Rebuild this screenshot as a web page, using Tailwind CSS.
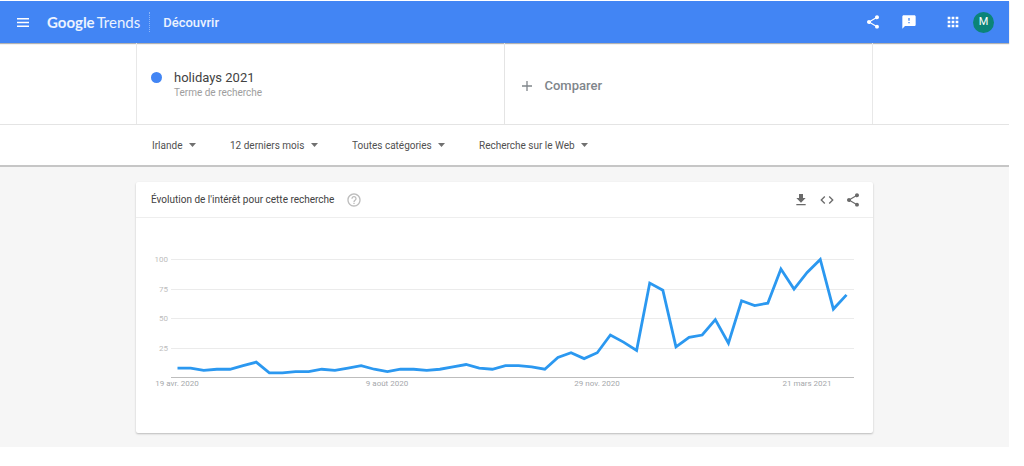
<!DOCTYPE html>
<html lang="fr">
<head>
  <meta charset="UTF-8" />
  <meta name="viewport" content="width=device-width, initial-scale=1.0"/>
  <title>holidays 2021 - Découvrir - Google Trends</title>
  <script src="https://cdn.jsdelivr.net/npm/@tailwindcss/browser@4"></script>
</head>
<body class="bg-white pt-px pr-[15px] font-['Roboto','Liberation_Sans',sans-serif] text-[#424242]">

  <!-- Top bar -->
  <header class="flex h-[42px] items-center bg-[#4285f4] pr-[15px] pl-4 text-white shadow-[0_1px_1px_rgba(0,0,0,0.3)]">
    <button type="button" aria-label="Menu" class="flex size-[14px] items-center justify-center">
      <svg class="h-[9px] w-3" viewBox="0 0 12 9" fill="currentColor"><path d="M0 0h12v1.4H0zM0 3.8h12v1.4H0zM0 7.6h12V9H0z"/></svg>
    </button>
    <a href="#" class="ml-[17px] flex gap-[2px] font-['Lato',sans-serif] text-[15px] text-white/90"><span class="font-bold">Google</span><span>Trends</span></a>
    <span class="ml-[9px] h-5 border-l border-dotted border-white/40"></span>
    <nav class="ml-[13px] pb-px"><a href="#" class="text-[13px] font-medium text-white/90">Découvrir</a></nav>

    <div class="ml-auto flex items-center">
      <button type="button" aria-label="Partager">
        <svg class="size-4" viewBox="0 0 24 24" fill="currentColor"><path d="M18 16.08c-.76 0-1.44.3-1.96.77L8.91 12.7c.05-.23.09-.46.09-.7s-.04-.47-.09-.7l7.05-4.11c.54.5 1.25.81 2.04.81 1.66 0 3-1.34 3-3s-1.34-3-3-3-3 1.34-3 3c0 .24.04.47.09.7L8.04 9.81C7.5 9.31 6.79 9 6 9c-1.66 0-3 1.34-3 3s1.34 3 3 3c.79 0 1.5-.31 2.04-.81l7.12 4.16c-.05.21-.08.43-.08.65 0 1.61 1.31 2.92 2.92 2.92s2.92-1.31 2.92-2.92-1.31-2.92-2.92-2.92z"/></svg>
      </button>
      <button type="button" aria-label="Commentaires" class="ml-5">
        <svg class="size-4" viewBox="0 0 24 24" fill="currentColor"><path d="M20 2H4c-1.1 0-1.99.9-1.99 2L2 22l4-4h14c1.1 0 2-.9 2-2V4c0-1.1-.9-2-2-2zm-7 12h-2v-2h2v2zm0-4h-2V6h2v4z"/></svg>
      </button>
      <button type="button" aria-label="Applications Google" class="ml-7">
        <svg class="size-4" viewBox="0 0 24 24" fill="currentColor"><path d="M4 8h4V4H4v4zm6 12h4v-4h-4v4zm-6 0h4v-4H4v4zm0-6h4v-4H4v4zm6 0h4v-4h-4v4zm6-10v4h4V4h-4zm-6 4h4V4h-4v4zm6 6h4v-4h-4v4zm0 6h4v-4h-4v4z"/></svg>
      </button>
      <button type="button" aria-label="Compte" class="ml-3 size-[21px] rounded-full bg-[#0b8478] text-[11px]">M</button>
    </div>
  </header>

  <!-- Search terms -->
  <section class="border-b border-[#e4e4e4]">
    <div class="mx-auto grid h-[81px] max-w-[737px] grid-cols-2 border-x border-[#e8e8e8]">
      <div class="flex items-center gap-3 border-r border-[#e4e4e4] pt-[2px] pl-[14px]">
        <span class="mb-[14px] size-[11px] rounded-full bg-[#4285f4]"></span>
        <div>
          <h1 class="text-[13px] leading-4">holidays 2021</h1>
          <p class="text-[10px] leading-[14px] text-[#9e9e9e]">Terme de recherche</p>
        </div>
      </div>
      <button type="button" class="flex items-center gap-[13px] pt-1 pl-[17px] text-[13px] font-medium text-[#80868b]">
        <svg class="size-[10px]" viewBox="0 0 10 10" stroke="currentColor" stroke-width="1.3"><path d="M5 0v10M0 5h10"/></svg>
        Comparer
      </button>
    </div>
  </section>

  <!-- Filters -->
  <section class="border-b-2 border-[#c6c6c6]">
    <form class="mx-auto flex h-10 max-w-[737px] items-center gap-[34px] pl-4 text-[10px] text-[#505050]">
      <label class="flex items-center gap-[6px]">
        <select aria-label="Zone géographique" class="appearance-none"><option>Irlande</option></select>
        <svg class="h-1 w-[7px] text-[#707070]" viewBox="0 0 7 4" fill="currentColor"><path d="M0 0h7L3.5 4z"/></svg>
      </label>
      <label class="flex items-center gap-[6px]">
        <select aria-label="Période" class="appearance-none"><option>12 derniers mois</option></select>
        <svg class="h-1 w-[7px] text-[#707070]" viewBox="0 0 7 4" fill="currentColor"><path d="M0 0h7L3.5 4z"/></svg>
      </label>
      <label class="flex items-center gap-[6px]">
        <select aria-label="Catégorie" class="appearance-none"><option>Toutes catégories</option></select>
        <svg class="h-1 w-[7px] text-[#707070]" viewBox="0 0 7 4" fill="currentColor"><path d="M0 0h7L3.5 4z"/></svg>
      </label>
      <label class="flex items-center gap-[6px]">
        <select aria-label="Type de recherche" class="appearance-none"><option>Recherche sur le Web</option></select>
        <svg class="h-1 w-[7px] text-[#707070]" viewBox="0 0 7 4" fill="currentColor"><path d="M0 0h7L3.5 4z"/></svg>
      </label>
    </form>
  </section>

  <!-- Interest over time -->
  <main class="bg-[#f6f6f6] pt-[15px] pb-[14px]">
    <div class="mx-auto max-w-[737px] rounded-xs bg-white shadow-[0_1px_2px_rgba(0,0,0,0.24)]">
      <div class="flex h-9 items-center border-b border-[#eeeeee] pr-3 pl-[15px]">
        <h2 class="text-[10px]">Évolution de l'intérêt pour cette recherche</h2>
        <button type="button" aria-label="Aide" class="ml-3 text-[#bdbdbd]">
          <svg class="size-4" viewBox="0 0 24 24" fill="currentColor"><path d="M11 18h2v-2h-2v2zm1-16C6.48 2 2 6.48 2 12s4.48 10 10 10 10-4.48 10-10S17.52 2 12 2zm0 18c-4.41 0-8-3.59-8-8s3.59-8 8-8 8 3.59 8 8-3.59 8-8 8zm0-14c-2.21 0-4 1.79-4 4h2c0-1.1.9-2 2-2s2 .9 2 2c0 2-3 1.75-3 5h2c0-2.25 3-2.5 3-5 0-2.21-1.79-4-4-4z"/></svg>
        </button>
        <div class="ml-auto flex items-center gap-[10px] text-[#6a6a6a]">
          <button type="button" aria-label="Télécharger">
            <svg class="size-4" viewBox="0 0 24 24" fill="currentColor"><path d="M19 9h-4V3H9v6H5l7 7 7-7zM5 18v2h14v-2H5z"/></svg>
          </button>
          <button type="button" aria-label="Intégrer">
            <svg class="size-4" viewBox="0 0 24 24" fill="currentColor"><path d="M9.4 16.6L4.8 12l4.6-4.6L8 6l-6 6 6 6 1.4-1.4zm5.2 0l4.6-4.6-4.6-4.6L16 6l6 6-6 6-1.4-1.4z"/></svg>
          </button>
          <button type="button" aria-label="Partager le graphique">
            <svg class="size-4" viewBox="0 0 24 24" fill="currentColor"><path d="M18 16.08c-.76 0-1.44.3-1.96.77L8.91 12.7c.05-.23.09-.46.09-.7s-.04-.47-.09-.7l7.05-4.11c.54.5 1.25.81 2.04.81 1.66 0 3-1.34 3-3s-1.34-3-3-3-3 1.34-3 3c0 .24.04.47.09.7L8.04 9.81C7.5 9.31 6.79 9 6 9c-1.66 0-3 1.34-3 3s1.34 3 3 3c.79 0 1.5-.31 2.04-.81l7.12 4.16c-.05.21-.08.43-.08.65 0 1.61 1.31 2.92 2.92 2.92s2.92-1.31 2.92-2.92-1.31-2.92-2.92-2.92z"/></svg>
          </button>
        </div>
      </div>

      <svg class="block w-full" viewBox="0 0 737 215" role="img" aria-label="Évolution de l'intérêt">
        <g stroke="#ebebeb">
          <path d="M35 41.5H718M35 71.5H718M35 100.5H718M35 130.5H718"/>
          <path d="M35 159.5H718" stroke="#bdbdbd"/>
        </g>
        <g class="fill-[#bdbdbd] text-[8px]" text-anchor="end">
          <text x="32" y="44">100</text>
          <text x="32" y="74">75</text>
          <text x="32" y="103">50</text>
          <text x="32" y="133">25</text>
        </g>
        <g class="fill-[#a5a8ab] text-[8px]" text-anchor="middle">
          <text x="41" y="168">19 avr. 2020</text>
          <text x="251" y="168">9 août 2020</text>
          <text x="461" y="168">29 nov. 2020</text>
          <text x="671" y="168">21 mars 2021</text>
        </g>
        <polyline id="trendLine" fill="none" stroke="#2b98f0" stroke-width="2.8"/>
      </svg>
    </div>
  </main>

  <script>
    // Weekly interest, 0 to 100
    const values = [
      8, 8, 6, 7, 7, 10, 13, 4, 4, 5, 5, 7, 6, 8, 10, 7, 5, 7, 7, 6, 7, 9, 11, 8, 7, 10,
      10, 9, 7, 17, 21, 16, 21, 36, 30, 23, 80, 74, 26, 34, 36, 49, 29, 65, 61, 63, 92, 75, 89, 100, 58, 70
    ];
    const left = 41.5, right = 710.5, bottom = 159.5, height = 118;
    const step = (right - left) / (values.length - 1);

    document.getElementById('trendLine').setAttribute('points',
      values.map((v, i) => `${left + i * step},${bottom - v * height / 100}`).join(' '));
  </script>
</body>
</html>
